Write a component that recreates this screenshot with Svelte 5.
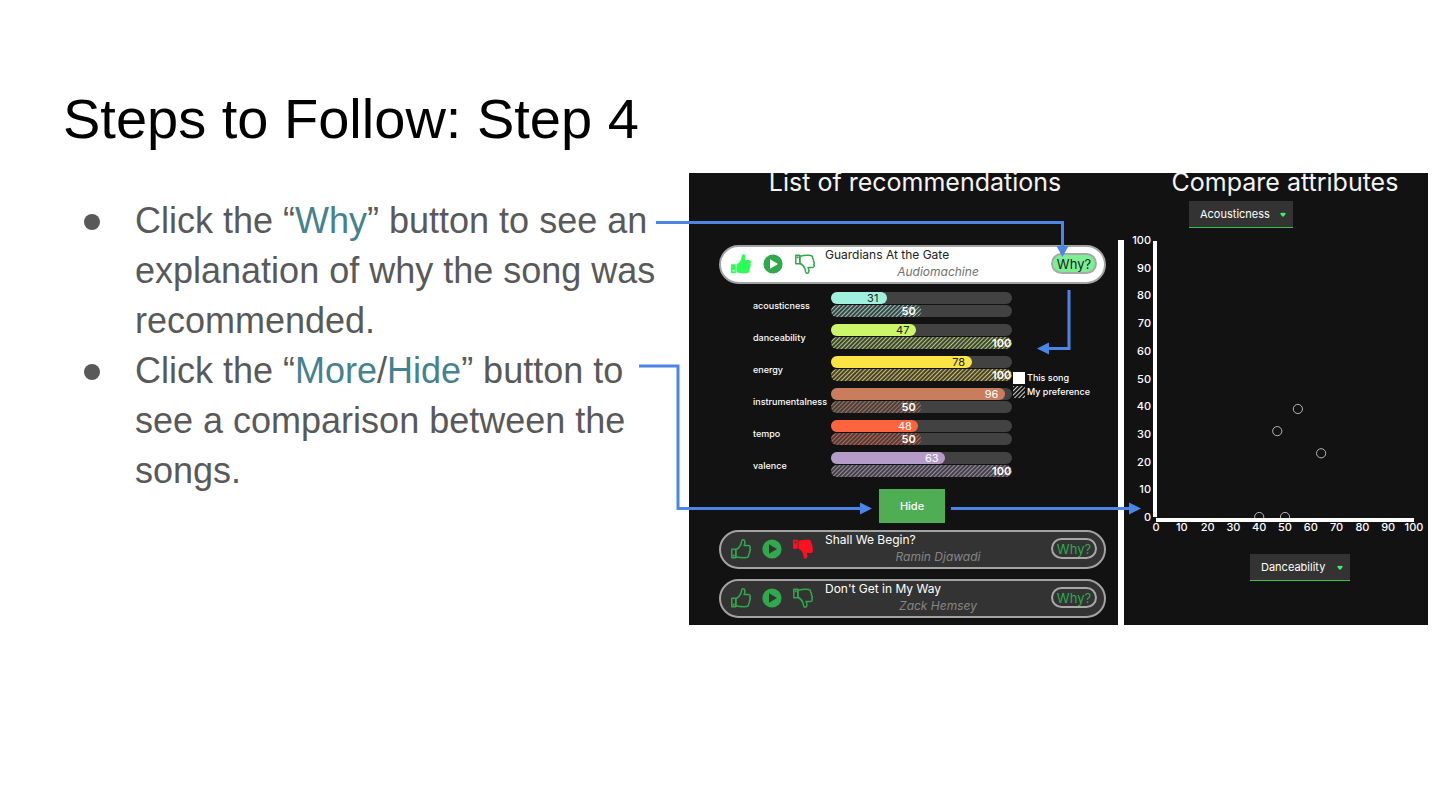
<script>
  const attributes = [
    { name: 'acousticness', song: 31, mine: 50, color: '#a0f0e0', ink: '#222' },
    { name: 'danceability', song: 47, mine: 100, color: '#cdf56a', ink: '#222' },
    { name: 'energy', song: 78, mine: 100, color: '#fbe444', ink: '#222' },
    { name: 'instrumentalness', song: 96, mine: 50, color: '#c87e5c', ink: '#fff' },
    { name: 'tempo', song: 48, mine: 50, color: '#ff643e', ink: '#fff' },
    { name: 'valence', song: 63, mine: 100, color: '#b59cc8', ink: '#fff' }
  ];
  const ticks = [0, 10, 20, 30, 40, 50, 60, 70, 80, 90, 100];
  const points = [
    { x: 55, y: 39 },
    { x: 47, y: 31 },
    { x: 64, y: 23 },
    { x: 40, y: 0 },
    { x: 50, y: 0 }
  ];
  const px = (v) => 32 + v * 2.58;
  const py = (v) => 289 - v * 2.77;

  let vertical = $state('Acousticness');
  let horizontal = $state('Danceability');
  const options = ['Acousticness', 'Danceability', 'Energy', 'Instrumentalness', 'Tempo', 'Valence'];
</script>

{#snippet hatching(id, color, rounded)}
  <svg class="hatching" aria-hidden="true">
    <defs>
      <pattern {id} width="3" height="3" patternUnits="userSpaceOnUse" patternTransform="rotate(45)">
        <rect width="1" height="3" fill={color} />
      </pattern>
    </defs>
    <rect width="100%" height="100%" rx={rounded ? 6 : 0} fill="url(#{id})" />
  </svg>
{/snippet}

{#snippet thumb(down, filled)}
  <svg class="thumb" class:down viewBox="0 0 20 20" aria-hidden="true">
    {#if filled}
      <path fill="currentColor" fill-rule="evenodd" d="M0 10.3h4.800v8.900H0zM2.500 15.8a1 1 0 1 0 0 2 1 1 0 0 0 0-2z" />
      <path fill="currentColor" d="M5.500 10.300C8 9.300 9.500 7 10.300 4.600 10.900 2.900 10.400.400 12 .300c2.600-.1 2.900 3.100 1.800 5.700h4c2.300 0 2.600 2.400 1.600 3.600.8 1.100.5 2.500-.3 3.300.4 1.200 0 2.300-.8 3 .1 2-.8 3.200-2.500 3.300-4 .2-7-.1-10.300-.9z" />
    {:else}
      <g fill="none" stroke="currentColor" stroke-width="1.500" stroke-linejoin="round">
        <path d="M.8 10.300h4v8.500h-4z" />
        <path d="M4.800 10.700C7.500 9.500 9.400 7 10.100 4.800c.5-1.700.3-3.800 1.600-4 2.600-.2 2.700 2.800 1.400 5.700h4.300c2 0 2.300 2 1.300 3.200.8 1 .5 2.300-.3 3.100.4 1.200.1 2.100-.8 2.800.2 1.800-.7 2.900-2.200 3-4 .2-7.500-.1-10.600-.8z" />
      </g>
      <circle cx="2.700" cy="16.700" r="1.100" fill="currentColor" />
    {/if}
  </svg>
{/snippet}

{#snippet card(title, artist, active, liked, disliked)}
  <article class="card" class:active>
    <div class="actions">
      <button class="icon" class:liked aria-label="Like">{@render thumb(false, liked)}</button>
      <button class="icon" aria-label="Play">
        <svg viewBox="0 0 20 20" aria-hidden="true">
          <path fill="currentColor" fill-rule="evenodd" d="M10 .4a9.600 9.600 0 1 0 0 19.200A9.600 9.600 0 0 0 10 .4zM7 5.200l8 4.800-8 4.800z" />
        </svg>
      </button>
      <button class="icon" class:disliked aria-label="Dislike">{@render thumb(true, disliked)}</button>
    </div>
    <div class="song">
      <h3>{title}</h3>
      <p>{artist}</p>
    </div>
    <button class="why">Why?</button>
  </article>
{/snippet}

{#snippet caret()}
  <svg class="caret" viewBox="0 0 6 5" aria-hidden="true">
    <path fill="#3df25c" d="M.2 1.200Q1.500 .4 3 1 4.500 .4 5.800 1.200 5.600 3 3 5 .4 3 .2 1.200z" />
  </svg>
{/snippet}

<main>
  <h1>Steps to Follow: Step 4</h1>
  <div class="content">
    <ul class="steps">
      <li>Click the “<em>Why</em>” button to see an explanation of why the song was recommended.</li>
      <li>Click the “<em>More</em>/<em>Hide</em>” button to see a comparison between the songs.</li>
    </ul>

    <div class="demo">
      <div class="panels">
        <section class="recommendations">
          <h2>List of recommendations</h2>
          {@render card('Guardians At the Gate', 'Audiomachine', true, true, false)}
          <div class="explain">
            <div class="rows">
              {#each attributes as a}
                <div class="row">
                  <span class="name">{a.name}</span>
                  <div class="bars">
                    <div class="track">
                      <div class="fill" style="width: {a.song}%; background: {a.color}; color: {a.ink}"><span>{a.song}</span></div>
                    </div>
                    <div class="track">
                      <div class="fill mine" style="width: {a.mine}%">
                        {@render hatching(`hatch-${a.name}`, a.color, true)}
                        <span>{a.mine}</span>
                      </div>
                    </div>
                  </div>
                </div>
              {/each}
            </div>
            <div class="legend">
              <div><i class="solid"></i>This song</div>
              <div><i>{@render hatching('hatch-legend', '#fff', false)}</i>My preference</div>
            </div>
          </div>
          <button class="hide">Hide</button>
          <div class="others">
            {@render card('Shall We Begin?', 'Ramin Djawadi', false, false, true)}
            {@render card("Don't Get in My Way", 'Zack Hemsey', false, false, false)}
          </div>
        </section>
        <div class="divider"></div>
        <section class="compare">
          <h2>Compare attributes</h2>
          <div class="pick first">
            <select aria-label="Vertical attribute" bind:value={vertical}>
              {#each options as o}<option>{o}</option>{/each}
            </select>
            {@render caret()}
          </div>
          <svg class="plot" viewBox="0 0 304 310" role="img" aria-label="Comparison of songs">
            {#each points as p}
              <circle cx={px(p.x)} cy={py(p.y)} r="4.600" fill="none" stroke="#b5b5b5" />
            {/each}
            <rect x="29" y="13" width="4" height="276" fill="#fff" />
            <rect x="32" y="290" width="258" height="4" fill="#fff" />
            {#each ticks as t}
              <text x="27" y={py(t) + 4} text-anchor="end">{t}</text>
              <text x={px(t)} y="303" text-anchor="middle">{t}</text>
            {/each}
          </svg>
          <div class="pick second">
            <select aria-label="Horizontal attribute" bind:value={horizontal}>
              {#each options as o}<option>{o}</option>{/each}
            </select>
            {@render caret()}
          </div>
        </section>
      </div>

      <svg class="arrows" viewBox="0 0 739 452" aria-hidden="true">
        <g fill="none" stroke="#4a86e8" stroke-width="3">
          <path d="M-33 49.500H373.500V74" />
          <path d="M380 117V175.500H359" />
          <path d="M-50 193H-11V335.500H172" />
          <path d="M262 335.500H441" />
        </g>
        <g fill="#4a86e8">
          <path d="M367.500 73h12l-6 11z" />
          <path d="M360 169.500v12l-12-6z" />
          <path d="M171 329.500v12l12-6z" />
          <path d="M440 329.500v12l12-6z" />
        </g>
      </svg>
    </div>
  </div>
</main>

<style>
  :global(body) { margin: 0; background: #fff; }
  main {
    padding: 86px 12px 24px 63px;
    font-family: "Liberation Sans", Arial, sans-serif;
  }
  h1, h2, h3, p, ul { margin: 0; padding: 0; font-weight: 400; }
  h1 { font-size: 56px; line-height: 65px; color: #000; }
  .content {
    display: grid;
    grid-template-columns: minmax(0, 626fr) minmax(0, 739fr);
    align-items: start;
    padding-top: 22px;
  }
  .steps {
    padding: 23px 16px 0 0;
    list-style: none;
    font-size: 36px;
    line-height: 50px;
    color: #595959;
  }
  .steps li { padding-left: 72px; position: relative; }
  .steps li::before {
    content: "";
    position: absolute;
    left: 21px;
    top: 18px;
    width: 16px;
    height: 16px;
    border-radius: 50%;
    background: #595959;
  }
  .steps em { font-style: normal; color: #45818e; }

  .demo { position: relative; font-family: Inter, sans-serif; color: #fff; }
  .arrows { position: absolute; inset: 0; width: 100%; overflow: visible; pointer-events: none; z-index: 1; }
  .panels {
    display: grid;
    grid-template-columns: minmax(0, 429fr) 6px minmax(0, 304fr);
    background: #121212;
    overflow: hidden;
  }
  h2 {
    font-size: 25px;
    line-height: 18px;
    height: 24px;
    text-align: center;
    white-space: nowrap;
    color: #f4f4f4;
  }
  button { font: inherit; cursor: pointer; }
  .recommendations { padding: 0 12px 7px 30px; }
  .recommendations h2 { margin-bottom: 48px; padding-left: 5px; }
  .divider { background: #fff; margin-top: 67px; }

  .card {
    display: flex;
    align-items: center;
    box-sizing: border-box;
    height: 39px;
    padding: 0 7px 2px 10px;
    border: 2px solid #a3a3a3;
    border-radius: 20px;
    background: #333;
  }
  .actions { display: flex; gap: 11px; margin-right: 12px; }
  .active .actions { gap: 12px; margin-right: 10px; }
  .icon { width: 20px; height: 20px; padding: 0; border: 0; background: none; color: #30a84c; }
  .icon svg { display: block; width: 20px; height: 20px; }
  .icon .down { transform: scaleY(-1); }
  .icon.liked { color: #2bff55; }
  .icon.disliked { color: #ff1020; }
  .song { flex: 1; align-self: stretch; }
  .song h3 { font-size: 12px; line-height: 16px; }
  .song p { font-size: 12px; line-height: 18px; text-align: center; font-style: italic; color: #858585; }
  .active { background: #fff; }
  .active h3 { color: #222; }
  .active p { color: #707070; }
  .why {
    box-sizing: border-box;
    width: 46px;
    height: 21px;
    padding: 0;
    border: 2px solid #a8a8a8;
    border-radius: 11px;
    background: none;
    color: #30a84c;
    font-size: 13px;
    line-height: 16px;
  }
  .active .why { background: #7cee94; color: #222; }

  .explain { display: flex; align-items: flex-start; padding: 8px 0 0 34px; }
  .rows { display: grid; gap: 7px; }
  .row { display: grid; grid-template-columns: 78px 181px; align-items: center; }
  .name { padding-top: 2px; font-size: 9px; line-height: 12px; font-weight: 500; white-space: nowrap; }
  .bars { display: grid; gap: 1px; }
  .track { height: 12px; border-radius: 6px; background: #424242; }
  .fill { display: grid; height: 12px; border-radius: 6px; }
  .fill > :global(*) { grid-area: 1 / 1; }
  .fill span { position: relative; justify-self: end; width: 20px; font-size: 11px; line-height: 12px; }
  .mine { font-weight: 600; }
  .hatching { display: block; width: 100%; height: 12px; opacity: 0.8; }
  .legend { display: grid; gap: 2px; margin: 80px 0 0 1px; font-size: 9px; line-height: 12px; font-weight: 500; white-space: nowrap; }
  .legend div { display: flex; align-items: center; gap: 2px; }
  .legend i { width: 12px; height: 12px; }
  .solid { background: #fff; }
  .hide {
    display: block;
    width: 66px;
    height: 34px;
    margin: 12px auto 7px 160px;
    padding: 0;
    border: 0;
    background: #4fae54;
    color: #fff;
    font-size: 11px;
    font-weight: 500;
  }
  .others { display: grid; gap: 10px; }

  .compare h2 { padding-left: 18px; margin-bottom: 4px; }
  .pick { display: grid; align-items: center; width: 104px; }
  .pick.first { margin-left: 65px; }
  .pick.second { margin-left: 126px; width: 100px; margin-top: 16px; }
  .pick > :global(*) { grid-area: 1 / 1; }
  select {
    appearance: none;
    box-sizing: border-box;
    width: 100%;
    height: 27px;
    padding: 0 0 1px 11px;
    border: 0;
    border-bottom: 1px solid #3ec04f;
    border-radius: 0;
    background: #333;
    color: #fff;
    font: 11px/16px Inter, sans-serif;
  }
  .caret { justify-self: end; width: 6px; height: 5px; margin-right: 7px; pointer-events: none; }
  .plot { display: block; width: 100%; font-size: 11px; font-weight: 500; fill: #fff; }
</style>
